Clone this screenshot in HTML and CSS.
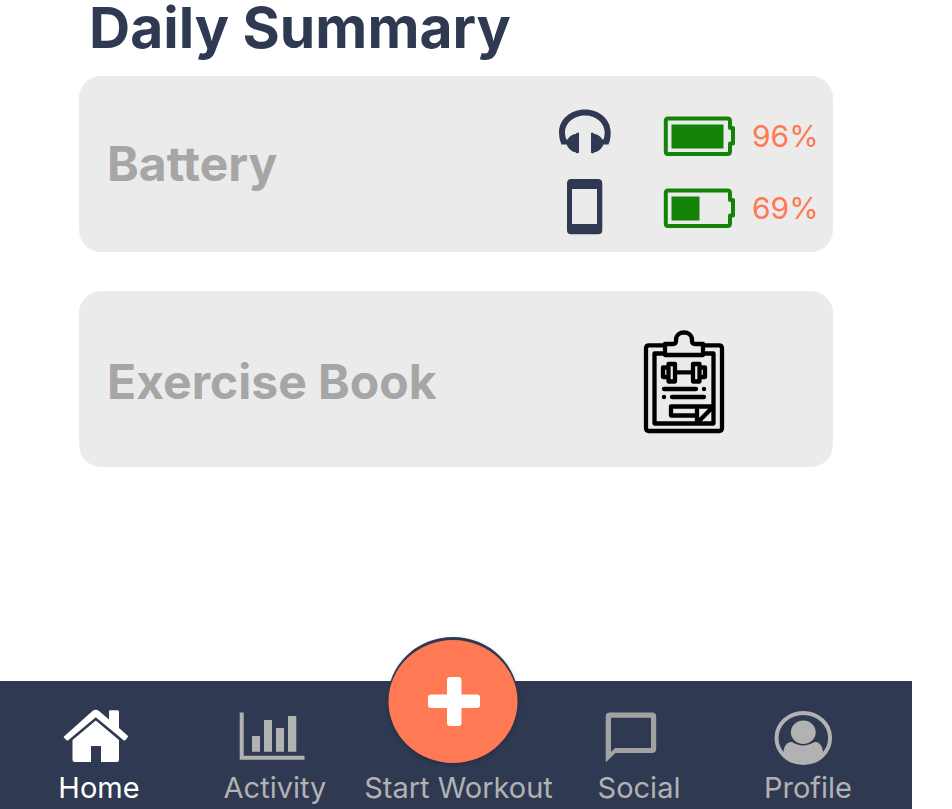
FILE: index.html
```html
<!DOCTYPE html>
<html lang="en">
<head>
<meta charset="utf-8">
<meta name="viewport" content="width=device-width, initial-scale=1">
<title>Daily Summary</title>
<link rel="stylesheet" href="styles.css">
</head>
<body>
<div class="app">
  <main class="content">
    <h1 class="page-title">Daily Summary</h1>

    <section class="card">
      <h2 class="card-title">Battery</h2>
      <ul class="readings">
        <li class="reading">
          <svg class="device" viewBox="555 106 60 60" role="img" aria-label="Headphones">
            <path d="M561.500 144.500C560 141 559 137 559 132.500C559 119 571 109.500 585 109.500C599 109.500 610.700 119 610.700 132.500C610.700 137 610 141 608.500 144.500H603.500C601.500 149 598.500 151.700 594.500 152.200L593.500 153.200Q591 153.500 591 152.500V132.700H593L594.500 134C597.500 134.500 600 135.500 602.500 139.500H603.500Q604.700 136 604.700 132.500C604.700 122.500 595.500 115.500 585 115.500C574.500 115.500 565 122.500 565 132.500Q565 136 566.300 139.500H567.500C570 135.500 572.500 134.500 575.500 134L577 132.700H579V152.500Q578.500 153.500 576.500 153.200L575.500 152.200C571.500 151.700 568.500 149 566.500 144.500Z" fill="#2f3951"/>
          </svg>
          <svg class="battery" viewBox="660 106 80 60" aria-hidden="true">
            <path d="M668 118.500H727.500Q730 118.500 730 121V128H733V143.500H730V151.500Q730 154 727.500 154H668Q665.800 154 665.800 151.800V121Q665.800 118.500 668 118.500Z" fill="none" stroke="#138408" stroke-width="4" stroke-linejoin="round"/>
            <path d="M671.500 124.500H723.500V148.500H671.500Z" fill="#138408"/>
          </svg>
          <span class="percent">96%</span>
        </li>
        <li class="reading">
          <svg class="device" viewBox="555 178 60 60" role="img" aria-label="Phone">
            <path fill-rule="evenodd" d="M571 179H598Q602.300 179 602.300 183.500V230Q602.300 234.300 598 234.300H571Q567 234.300 567 230V183.500Q567 179 571 179ZM572 189V224H597V189Z" fill="#2f3951"/>
          </svg>
          <svg class="battery" viewBox="660 106 80 60" aria-hidden="true">
            <path d="M668 118.500H727.500Q730 118.500 730 121V128H733V143.500H730V151.500Q730 154 727.500 154H668Q665.800 154 665.800 151.800V121Q665.800 118.500 668 118.500Z" fill="none" stroke="#138408" stroke-width="4" stroke-linejoin="round"/>
            <path d="M671.500 124.500H699.500V148.500H671.500Z" fill="#138408"/>
          </svg>
          <span class="percent">69%</span>
        </li>
      </ul>
    </section>

    <section class="card card-book">
      <h2 class="card-title">Exercise Book</h2>
      <svg class="clipboard" viewBox="0 0 110 125" role="img" aria-label="Exercise book">
        <g fill="none" stroke="#000" stroke-width="4.300" stroke-linejoin="round" stroke-linecap="round">
          <path d="M34 25.300H19Q16 25.300 16 28.300V108Q16 111 19 111H89Q92 111 92 108V28.300Q92 25.300 89 25.300H74"/>
          <path d="M34 33.500H24.500V103.500H83.500V33.500H74"/>
          <path d="M35 35V24H43Q46 24 46 21V20C46 10 62 10 62 20V21Q62 24 65 24H73V35Z"/>
          <path d="M38.500 44H45V61.500H38.500ZM63 44H69.500V61.500H63ZM37 47.500H33V57H37M71 47.500H75V57H71M46 52.300H62"/>
          <path d="M34 69H66M42 77H74"/>
          <path d="M82.500 86.500H41V95.500H67V87M67 95.500V102.500M68 102L83 87"/>
        </g>
        <circle cx="74" cy="69" r="2.200"/><circle cx="34" cy="77" r="2.200"/>
      </svg>
    </section>
  </main>

  <nav class="tabs" aria-label="Main">
    <a class="tab tab-active" href="#home" aria-current="page">
      <svg class="tab-icon" viewBox="59 707 80 60" aria-hidden="true">
        <path d="M64 736.500L92.500 711Q95.800 708.500 99 711L109 719.500V711.500Q109 710.300 110.300 710.300H117.500Q119 710.300 119 711.800V728L127.500 735.500Q128.500 736.500 127.500 737.600L125.500 740Q124.500 741 123.300 740L95.800 717.200L68.500 740Q67.300 741 66.300 740L64 737.800Q63.400 737 64 736.500Z"/>
        <path d="M72.500 740L95.800 720.500L119 740V760Q119 762 117 762H101V746H91V762H74.500Q72.500 762 72.500 760Z"/>
      </svg>
      <span>Home</span>
    </a>
    <a class="tab" href="#activity">
      <svg class="tab-icon" viewBox="235 707 80 60" aria-hidden="true">
        <path d="M239.700 712.500H243.700V755.700H304.500V759.700H239.700ZM252 736H260V751.700H252ZM264 720H272V751.700H264ZM276 728H284V751.700H276ZM288 716H296.300V751.700H288Z"/>
      </svg>
      <span>Activity</span>
    </a>
    <button class="tab" type="button">
      <svg class="start-icon" viewBox="384 635 150 132" aria-hidden="true">
        <ellipse class="start-rim" cx="453" cy="700" rx="65.500" ry="63"/>
        <ellipse class="start-disc" cx="453" cy="701.500" rx="64.500" ry="61.500"/>
        <path d="M450 677H458.500Q461.500 677 461.500 680V694.500H477Q480 694.500 480 697.500V705Q480 708 477 708H461.500V723Q461.500 726 458.500 726H450Q447 726 447 723V708H431Q428 708 428 705V697.500Q428 694.500 431 694.500H447V680Q447 677 450 677Z" fill="#fff"/>
      </svg>
      <span>Start Workout</span>
    </button>
    <a class="tab" href="#social">
      <svg class="tab-icon" viewBox="599 707 80 60" aria-hidden="true">
        <path class="bubble" fill-rule="evenodd" d="M610 712.500H652Q656.200 712.500 656.200 716.500V748.500Q656.200 753 652 753H615.500L605.700 762.500V716.500Q605.700 712.500 610 712.500ZM611 717.700V752L615 748H651V717.700Z"/>
      </svg>
      <span>Social</span>
    </a>
    <a class="tab" href="#profile">
      <svg class="tab-icon" viewBox="768 707 80 60" aria-hidden="true">
        <ellipse cx="803.300" cy="738" rx="26.800" ry="25" fill="none" stroke="#b2b2b2" stroke-width="4"/>
        <ellipse cx="803.300" cy="732.300" rx="12.400" ry="11.700"/>
        <path d="M783.500 752C784 746 787 741.500 792 742C799 746.500 807 746.500 814.500 742C819.500 741.500 822.500 746 823 752C817 767 789 767 783.500 752Z"/>
      </svg>
      <span>Profile</span>
    </a>
  </nav>
</div>
</body>
</html>
```
FILE: styles.css
```css
* {
  box-sizing: border-box;
}

body {
  margin: 0;
  background: #fff;
  font-family: Inter, "Liberation Sans", sans-serif;
}

.app {
  display: flex;
  flex-direction: column;
  min-height: 100vh;
  margin-right: 40px;
}

.content {
  flex: 1;
  padding: 0 79px;
}

.page-title {
  margin: 0 0 20px;
  padding-left: 10px;
  font-size: 57px;
  line-height: 56px;
  font-weight: 700;
  color: #2f3951;
}

.card {
  display: flex;
  align-items: center;
  justify-content: space-between;
  min-height: 176px;
  margin-bottom: 39px;
  padding: 0 16px 0 28px;
  border-radius: 22px;
  background: #ebebeb;
}

.card-book {
  padding-top: 6px;
  padding-right: 93px;
}

.card-title {
  margin: 0;
  font-size: 48px;
  line-height: 56px;
  font-weight: 700;
  color: #a6a6a6;
}

.readings {
  margin: 16px 0 0;
  padding: 0;
  list-style: none;
}

.reading {
  display: flex;
  align-items: center;
  height: 72px;
}

.device {
  width: 60px;
  height: 60px;
  margin-right: 45px;
}

.battery {
  width: 80px;
  height: 60px;
  margin-right: 12px;
}

.percent {
  width: 65px;
  font-size: 30px;
  line-height: 40px;
  color: #ff7954;
}

.clipboard {
  width: 110px;
  height: 125px;
}

.tabs {
  display: grid;
  grid-template-columns: 176fr 176fr 191fr 170fr 168fr;
  padding: 26px 20px 0 11px;
  background: #2f3951;
}

.tab {
  display: flex;
  flex-direction: column;
  align-items: center;
  padding: 0;
  border: 0;
  background: none;
  font: inherit;
  font-size: 29px;
  line-height: 42px;
  white-space: nowrap;
  text-decoration: none;
  color: #b2b2b2;
  fill: #b2b2b2;
}

.tab-active {
  color: #fff;
  fill: #fff;
}

.tab-icon {
  width: 80px;
  height: 60px;
}

.start-icon {
  width: 150px;
  height: 132px;
  margin-top: -72px;
}

.start-rim {
  fill: #2f3951;
  filter: drop-shadow(0 2px 2px rgba(0, 0, 0, 0.2));
}

.start-disc {
  fill: #ff7954;
}

.bubble {
  fill: #a2a2a2;
}
```
